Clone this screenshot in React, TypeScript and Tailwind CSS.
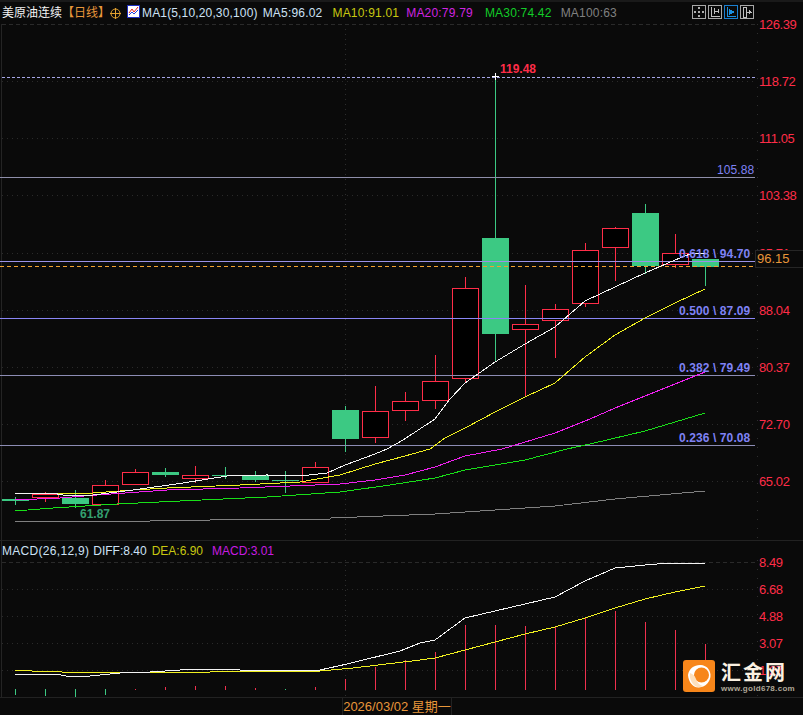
const FONT = { fontFamily: '"Liberation Sans", "Noto Sans CJK SC", sans-serif' };

const RED = "#ff2d48";
const GREEN = "#3cc983";
const FIB = "#8a86f5";

// cx, high, open-top, bottom, low
type Candle = [number, number, number, number, number, "r" | "g"];

const candles: Candle[] = [
  [15, 497, 499, 501, 505, "g"],
  [45, 492, 494, 497, 502, "r"],
  [75, 490, 498, 504, 508, "g"],
  [105, 480, 485, 504, 505, "r"],
  [135, 469, 472, 484, 484, "r"],
  [165, 468, 472, 475, 477, "g"],
  [195, 466, 475, 478, 483, "r"],
  [225, 467, 475, 476, 479, "g"],
  [255, 471, 475, 480, 482, "g"],
  [285, 471, 480, 481, 493, "g"],
  [315, 462, 467, 482, 483, "r"],
  [345, 406, 410, 439, 452, "g"],
  [375, 386, 411, 437, 443, "r"],
  [405, 392, 401, 410, 421, "r"],
  [435, 355, 381, 400, 409, "r"],
  [465, 277, 288, 378, 383, "r"],
  [495, 76, 238, 334, 362, "g"],
  [525, 285, 324, 329, 396, "r"],
  [555, 304, 309, 320, 358, "r"],
  [585, 243, 250, 303, 307, "r"],
  [615, 227, 228, 247, 281, "r"],
  [645, 204, 213, 266, 274, "g"],
  [675, 234, 253, 264, 268, "r"],
  [705, 259, 259, 267, 286, "g"],
];

const ma5 = "15,493 52,493 63,495 75,496 93,495 133,490 183,483 227,476 267,475 300,476 327,473 345,465 375,454 387,449 403,440 435,419 450,399 465,383 495,362 525,344 555,327 585,301 615,287 645,273 675,260 690,254 705,253";
const ma10 = "15,493 60,494 93,493 133,490 167,488 240,485 300,482 340,475 375,464 405,456 430,449 445,438 467,427 495,412 525,397 555,383 585,357 615,335 645,318 675,303 705,289";
const ma20 = "15,500 60,498 97,495 167,490 240,488 340,484 375,480 405,475 435,467 465,456 502,449 555,433 590,419 615,408 645,396 675,384 705,372";
const ma30 = "15,511 53,508 117,504 180,501 267,497 340,492 390,485 435,478 465,470 495,465 525,460 567,449 590,444 645,431 705,413";
const ma100 = "15,521 150,521 151,520 210,520 211,519 330,519 331,518 435,514 495,510 555,506 615,499 660,495 705,491";

const diff = "15,674 51,674 61,675 71,677 90,676 120,673 150,672 180,670 210,669 240,670 270,671 300,670 320,670 347,664 400,651 420,643 435,640 465,618 495,611 525,604 555,597 585,581 615,568 645,565 670,563 690,563 705,564";
const dea = "15,670 31,670 32,671 61,671 62,672 210,672 211,671 320,671 353,668 420,660 435,658 465,650 495,642 525,634 555,627 585,618 615,608 645,599 675,592 705,586";

// x, top, bottom
const macdBars: [number, number, number, "r" | "g"][] = [
  [15, 689, 695, "g"], [45, 689, 696, "g"], [75, 689, 697, "g"], [105, 689, 695, "g"],
  [135, 689, 690, "r"], [165, 687, 690, "r"], [195, 686, 690, "r"], [225, 686, 690, "r"],
  [255, 688, 690, "r"], [285, 689, 690, "g"], [315, 687, 690, "r"], [345, 679, 690, "r"],
  [375, 667, 690, "r"], [405, 660, 690, "r"], [435, 652, 690, "r"], [465, 625, 690, "r"],
  [495, 625, 690, "r"], [525, 626, 690, "r"], [555, 627, 690, "r"], [585, 617, 690, "r"],
  [615, 611, 690, "r"], [645, 622, 690, "r"], [675, 630, 690, "r"], [705, 644, 690, "r"],
];

const priceAxis: [number, string][] = [
  [24, "126.39"], [81, "118.72"], [138, "111.05"], [195, "103.38"], [253, "95.71"],
  [310, "88.04"], [367, "80.37"], [424, "72.70"], [481, "65.02"],
];

const fibs: [number, string, string, number][] = [
  [177, "#8e8eaa", "105.88", 170],
  [261, "#9a92e8", "0.618 \\ 94.70", 254],
  [318.5, FIB, "0.500 \\ 87.09", 311],
  [375.5, "#8c8cb4", "0.382 \\ 79.49", 368],
  [445.5, "#8c8cb4", "0.236 \\ 70.08", 438],
];

const macdAxis: [number, string][] = [[562, "8.49"], [589, "6.68"], [616, "4.88"], [643, "3.07"], [670, "1.27"]];

function ToolBtn({ active, children }: { active?: boolean; children: React.ReactNode }) {
  return (
    <div className={`w-[14px] h-[14px] border ${active ? "border-[#1a7fd0]" : "border-[#a8a8a8]"}`}>
      <svg width="12" height="12" viewBox="0 0 12 12" shapeRendering="crispEdges">
        {children}
      </svg>
    </div>
  );
}

function MainChart() {
  return (
    <svg width="803" height="516" viewBox="0 24 803 516" className="block overflow-visible" style={FONT}>
      <line x1="1.5" x2="1.5" y1="24" y2="540" stroke="#242424" shapeRendering="crispEdges" />
      {priceAxis.map(([y], i) => (
        <line key={y} x1="2" x2="757" y1={y + 0.5} y2={y + 0.5} stroke="#2a2a2a" strokeDasharray={i === 0 ? "4 3" : "1 4"} shapeRendering="crispEdges" />
      ))}
      <line x1="345.5" x2="345.5" y1="24" y2="540" stroke="#2e2e2e" strokeDasharray="1 4" shapeRendering="crispEdges" />
      <line x1="757.5" x2="757.5" y1="24" y2="540" stroke="#2e2e2e" strokeDasharray="1 8" shapeRendering="crispEdges" />

      {/* high line */}
      <line x1="2" x2="755" y1="77.5" y2="77.5" stroke="#a6a6e6" strokeDasharray="3 2" shapeRendering="crispEdges" />

      {candles.map(([x, hi, top, bot, lo, c]) => (
        <g key={x} shapeRendering="crispEdges">
          <line x1={x + 0.5} x2={x + 0.5} y1={hi} y2={lo} stroke={c === "r" ? RED : GREEN} />
          {c === "r" ? (
            <rect x={x - 12.5} y={top + 0.5} width="26" height={bot - top} fill="#000" stroke={RED} />
          ) : (
            <rect x={x - 13} y={top} width="27" height={bot - top} fill={GREEN} />
          )}
        </g>
      ))}

      {fibs.map(([y, color]) => (
        <line key={y} x1="0" x2="755" y1={y} y2={y} stroke={color} shapeRendering="crispEdges" />
      ))}
      <line x1="0" x2="755" y1="266.5" y2="266.5" stroke="#f0a030" strokeDasharray="4 3" shapeRendering="crispEdges" />

      <g fill="none" shapeRendering="crispEdges">
        <polyline points={ma100} stroke="#808080" />
        <polyline points={ma30} stroke="#18e018" />
        <polyline points={ma20} stroke="#f020f0" />
        <polyline points={ma10} stroke="#f0f020" />
        <polyline points={ma5} stroke="#f4f4f4" />
      </g>

      {/* crosshair at the high */}
      <path d="M492 76.5h7M495.5 73v7" stroke="#fff" shapeRendering="crispEdges" />

      <text x="500" y="73" fontSize="12" fontWeight="700" fill={RED}>119.48</text>
      <text x="80" y="518" fontSize="12" fontWeight="700" fill="#34a070">61.87</text>

      {fibs.map(([y, , label, ly]) => (
        <text key={y} x={label.length < 7 ? 717 : 679} y={ly + 4} fontSize="12" fontWeight={label.length < 7 ? 400 : 700} fill="#7f82f5" letterSpacing="0.1">
          {label}
        </text>
      ))}

      {priceAxis.map(([y, label]) => (
        <text key={label} x="759" y={y + 4.5} fontSize="13" fill={RED} letterSpacing="-0.4">{label}</text>
      ))}

      {/* last price tag */}
      <rect x="755.5" y="250.5" width="48" height="17" fill="#0a0a0a" stroke="#262626" shapeRendering="crispEdges" />
      <text x="757" y="263" fontSize="13" fill="#e8963a">96.15</text>
    </svg>
  );
}

function MacdChart() {
  return (
    <svg width="803" height="137" viewBox="0 560 803 137" className="block overflow-visible" style={FONT}>
      <line x1="1.5" x2="1.5" y1="540" y2="697" stroke="#242424" shapeRendering="crispEdges" />
      {macdAxis.map(([y], i) => (
        <line key={y} x1="2" x2="757" y1={y + 0.5} y2={y + 0.5} stroke="#2a2a2a" strokeDasharray={i === 0 ? "4 3" : "1 4"} shapeRendering="crispEdges" />
      ))}
      <line x1="345.5" x2="345.5" y1="560" y2="697" stroke="#2e2e2e" strokeDasharray="1 4" shapeRendering="crispEdges" />
      <line x1="757.5" x2="757.5" y1="560" y2="697" stroke="#2e2e2e" strokeDasharray="1 8" shapeRendering="crispEdges" />

      {macdBars.map(([x, t, b, c]) => (
        <line key={x} x1={x + 0.5} x2={x + 0.5} y1={t} y2={b} stroke={c === "r" ? "#f0304e" : GREEN} shapeRendering="crispEdges" />
      ))}

      <g fill="none" shapeRendering="crispEdges">
        <polyline points={dea} stroke="#f0f020" />
        <polyline points={diff} stroke="#f4f4f4" />
      </g>

      {macdAxis.map(([y, label]) => (
        <text key={label} x="759" y={y + 4.5} fontSize="13" fill={RED} letterSpacing="-0.4">{label}</text>
      ))}
    </svg>
  );
}

function GoldLogo() {
  return (
    <div className="absolute left-[683px] top-[660px] flex items-start gap-[6px]">
      <svg width="32" height="32" viewBox="0 0 32 32">
        <rect width="32" height="32" rx="3" fill="#f7861a" />
        <path d="M5 15C6 8 12 4.500 18 5c5 .4 9 4 9.500 9.500C28 21 23 27 16 27.500 10 28 5.500 22 5 15Z" fill="#fff" />
        <circle cx="18.500" cy="15" r="7.500" fill="#f7861a" />
        <path d="M7 13c3 1 5 3 6 6 1 3 3 6 7 7-2 1-5 1.500-7 .5-4-2-7-8-6-13.500Z" fill="#fde0bd" />
      </svg>
      <div className="flex flex-col">
        <span className="text-[20px] leading-[24px] font-bold tracking-[2px] text-[#fbf1e2]" style={{ fontFamily: '"Noto Sans CJK SC", sans-serif' }}>汇金网</span>
        <span className="text-[8px] leading-[8px] mt-[1px] text-[#b0a898] font-bold tracking-[0.3px]" style={FONT}>www.gold678.com</span>
      </div>
    </div>
  );
}

export default function App() {
  return (
    <div className="relative w-[803px] h-[715px] overflow-hidden bg-[#0a0a0a] text-[12px]" style={FONT}>
      {/* top legend */}
      <div className="flex items-center h-[24px] pl-[2px] border-t-2 border-[#1a1a1a] whitespace-nowrap">
        <span className="text-[#f2f2f2]">美原油连续</span>
        <span className="text-[#e8963a]">【日线】</span>
        <svg width="11" height="11" viewBox="0 0 11 11">
          <circle cx="5.500" cy="5.500" r="4.500" fill="none" stroke="#e0a030" />
          <path d="M0 5.500h11M5.500 0v11" stroke="#e0a030" />
        </svg>
        <svg width="13" height="13" viewBox="0 0 13 13" className="ml-[6px] mb-[3px]" shapeRendering="crispEdges">
          <rect x=".5" y=".5" width="12" height="12" fill="#fff" stroke="#2030c0" />
          <path d="M2 8l3-4 2 3 4-5" fill="none" stroke="#e02020" shapeRendering="auto" />
          <path d="M2 10l3-3 2 2 4-4" fill="none" stroke="#2040e0" shapeRendering="auto" />
        </svg>
        <span className="ml-[2px] text-[#cde2f6] tracking-[0.15px]">MA1(5,10,20,30,100)</span>
        <span className="ml-[5px] text-[#cde2f6] tracking-[0.2px]">MA5:96.02</span>
        <span className="ml-[10px] text-[#c8c810] tracking-[0.2px]">MA10:91.01</span>
        <span className="ml-[7px] text-[#d024e0] tracking-[0.2px]">MA20:79.79</span>
        <span className="ml-[12px] text-[#12cc28] tracking-[0.2px]">MA30:74.42</span>
        <span className="ml-[9px] text-[#808080] tracking-[0.2px]">MA100:63</span>
        <div className="ml-auto mr-[49px] flex gap-[2px] mb-[2px]">
          <ToolBtn>
            <path d="M5 1h2v2H5zM5 9h2v2H5zM1 5h2v2H1zM9 5h2v2H9zM5 5h2v2H5z" fill="#b0b0b0" />
          </ToolBtn>
          <ToolBtn>
            <path d="M2 1v9h9M5 2v6M9 3v4M6 5h3" fill="none" stroke="#c0c0c0" />
          </ToolBtn>
          <ToolBtn active>
            <path d="M2 1v9h9" fill="none" stroke="#1a8fe0" />
            <path d="M4 3v6l6-3z" fill="#1a8fe0" />
          </ToolBtn>
          <ToolBtn>
            <path d="M2 1h3v10H2z" fill="none" stroke="#c0c0c0" />
            <path d="M6 6h5M8 4v4M9 5v2" fill="none" stroke="#c0c0c0" />
          </ToolBtn>
        </div>
      </div>

      <MainChart />

      {/* macd panel */}
      <div className="border-t border-[#222]">
        <div className="flex items-center h-[19px] pl-[2px] whitespace-nowrap">
          <span className="text-[#cde2f6] tracking-[0.3px]">MACD(26,12,9)</span>
          <span className="ml-[4px] text-[#cde2f6]">DIFF:8.40</span>
          <span className="ml-[5px] text-[#c8c810]">DEA:6.90</span>
          <span className="ml-[9px] text-[#c81ce0]">MACD:3.01</span>
        </div>
        <MacdChart />
      </div>

      {/* date bar */}
      <div className="flex h-[18px] border-t border-[#222]">
        <div className="ml-[342px] w-[110px] h-full border-x border-[#222] flex items-center justify-center text-[13px] text-[#e8963a] whitespace-nowrap">
          2026/03/02 星期一
        </div>
      </div>

      <GoldLogo />
    </div>
  );
}
